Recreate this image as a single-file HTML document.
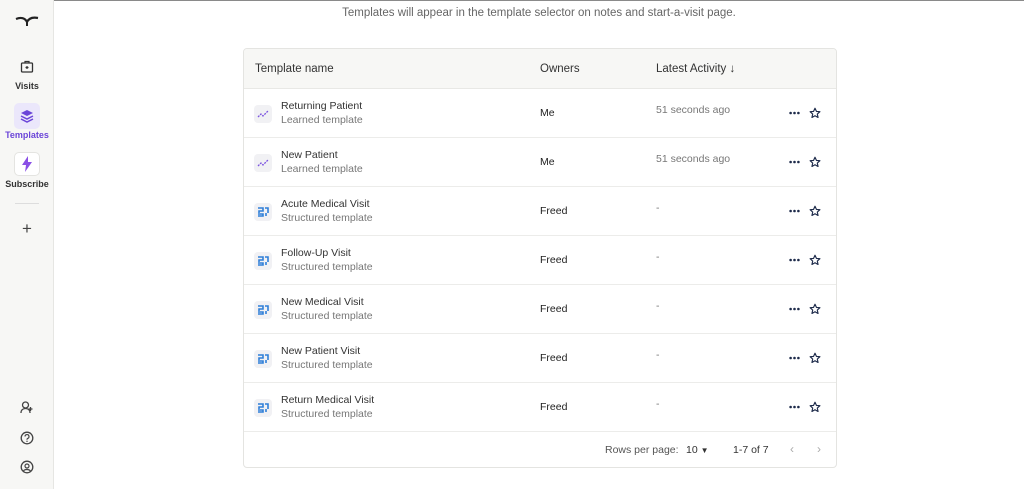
<!DOCTYPE html>
<html><head><style>
*{margin:0;padding:0;box-sizing:border-box}
body{width:1024px;height:489px;overflow:hidden;font-family:"Liberation Sans",sans-serif;background:#fff;position:relative;color:#222}
.side{position:absolute;left:0;top:0;width:54px;height:489px;background:#f7f7f5;border-right:1px solid #e6e6e3}
.topline{position:absolute;left:0;top:0;width:1024px;height:1px;background:#8a8a8a}
.nav{position:absolute;left:0;width:54px;text-align:center;font-size:9px;color:#333}
.ic{position:absolute}
.tbl{position:absolute;left:243px;top:48px;width:594px;height:420px;border:1px solid #e4e4e1;border-radius:4px;overflow:hidden}
.hd{height:40px;background:#f7f7f5;border-bottom:1px solid #e8e8e5;position:relative;font-size:11.5px;color:#333}
.row{height:49px;border-bottom:1px solid #ececea;position:relative}
.abs{position:absolute}
.nm{left:37px;top:11px;font-size:10.5px;color:#333}
.sub{left:37px;top:25px;font-size:10.5px;color:#777}
.own{left:296px;top:18px;font-size:10.5px;color:#222}
.act{left:412px;top:15px;font-size:10.5px;color:#777}
.ico{left:10px;top:16px;width:18px;height:18px;background:#f1f1f4;border-radius:4px}
</style></head><body>
<div class="topline"></div>
<div class="side">
 <svg class="ic" style="left:15px;top:14px" width="24" height="14" viewBox="0 0 24 14"><path d="M1 5 C6 3,10 4,12 8 C14 4,18 3,23 4" stroke="#222" stroke-width="2.2" fill="none"/><path d="M12 8 L12 12" stroke="#222" stroke-width="2"/></svg>
 <svg class="ic" style="left:20px;top:60px" width="14" height="13" viewBox="0 0 14 13"><rect x="1.5" y="3" width="11" height="9" rx="1" stroke="#333" fill="none" stroke-width="1.3"/><path d="M5 3V1.5h4V3M7 6v3M5.5 7.5h3" stroke="#333" stroke-width="1.2" fill="none"/></svg>
 <div class="nav" style="top:81px;font-weight:bold">Visits</div>
 <div class="ic" style="left:14px;top:103px;width:26px;height:26px;background:#ebe7fb;border-radius:5px"></div>
 <svg class="ic" style="left:20px;top:109px" width="14" height="14" viewBox="0 0 14 14"><path d="M7 1L13 4 7 7 1 4Z" fill="#6b45d8"/><path d="M1 7l6 3 6-3M1 10l6 3 6-3" stroke="#6b45d8" stroke-width="1.5" fill="none"/></svg>
 <div class="nav" style="top:130px;color:#6b45d8;font-weight:bold">Templates</div>
 <div class="ic" style="left:14px;top:152px;width:26px;height:24px;background:#fff;border:1px solid #e4e4e1;border-radius:5px"></div>
 <svg class="ic" style="left:21px;top:156px" width="12" height="16" viewBox="0 0 12 16"><path d="M7 0L1 9h4l-1 7 7-10H7z" fill="#8a4fe6"/></svg>
 <div class="nav" style="top:179px;font-weight:bold">Subscribe</div>
 <div class="ic" style="left:15px;top:203px;width:24px;height:1px;background:#ddd"></div>
 <div class="nav" style="top:219px;font-size:17px;color:#444">+</div>
 <svg class="ic" style="left:20px;top:401px" width="14" height="13" viewBox="0 0 14 13"><circle cx="5.5" cy="4" r="3" stroke="#444" fill="none" stroke-width="1.3"/><path d="M1 12c0-3 2-4.5 4.5-4.5S10 9 10 12M10.5 6v4M8.5 8h4" stroke="#444" fill="none" stroke-width="1.3"/></svg>
 <svg class="ic" style="left:20px;top:431px" width="14" height="14" viewBox="0 0 14 14"><circle cx="7" cy="7" r="5.8" stroke="#444" fill="none" stroke-width="1.3"/><path d="M5 5.5a2 2 0 1 1 2.5 2c-.5.2-.5.7-.5 1.3" stroke="#444" fill="none" stroke-width="1.2"/><circle cx="7" cy="10.3" r=".7" fill="#444"/></svg>
 <svg class="ic" style="left:20px;top:460px" width="14" height="14" viewBox="0 0 14 14"><circle cx="7" cy="7" r="5.8" stroke="#444" fill="none" stroke-width="1.3"/><circle cx="7" cy="6" r="2" stroke="#444" fill="none" stroke-width="1.2"/><path d="M3.5 11c1-2 5.5-2 7 0" stroke="#444" fill="none" stroke-width="1.2"/></svg>
</div>
<div class="abs" style="left:54px;top:7px;width:970px;text-align:center;font-size:11.5px;color:#666">Templates will appear in the template selector on notes and start-a-visit page.</div>
<div class="tbl">
 <div class="hd"><span class="abs" style="left:11px;top:14px">Template name</span><span class="abs" style="left:296px;top:14px">Owners</span><span class="abs" style="left:412px;top:14px">Latest Activity ↓</span></div>
 ROWS
</div>
<script>
const rows=[["Returning Patient","Learned template","Me","51 seconds ago",1],["New Patient","Learned template","Me","51 seconds ago",1],["Acute Medical Visit","Structured template","Freed","-",0],["Follow-Up Visit","Structured template","Freed","-",0],["New Medical Visit","Structured template","Freed","-",0],["New Patient Visit","Structured template","Freed","-",0],["Return Medical Visit","Structured template","Freed","-",0]];
let h="";
for(const r of rows){
 const icon=r[4]?'<svg class="abs" style="left:13px;top:20px" width="12" height="9" viewBox="0 0 12 9"><path d="M1 8l3-3 2 2 5-5" stroke="#7c55e0" stroke-width="1.3" fill="none" stroke-dasharray="2 1"/></svg>':'<svg class="abs" style="left:14px;top:20px" width="11" height="10" viewBox="0 0 11 10"><path d="M0 1h5v3H1v2M0 7h5v2H0M7 1h3v5M8 6v3" stroke="#2f7fd8" stroke-width="1.6" fill="none"/></svg>';
 h+=`<div class="row"><div class="abs ico"></div>${icon}<span class="abs nm">${r[0]}</span><span class="abs sub">${r[1]}</span><span class="abs own">${r[2]}</span><span class="abs act">${r[3]}</span><svg class="abs" style="left:545px;top:22px" width="11" height="4" viewBox="0 0 11 4"><circle cx="1.6" cy="2" r="1.3" fill="#1d2a4a"/><circle cx="5.5" cy="2" r="1.3" fill="#1d2a4a"/><circle cx="9.4" cy="2" r="1.3" fill="#1d2a4a"/></svg><svg class="abs" style="left:565px;top:18px" width="12" height="12" viewBox="0 0 24 24"><path d="M12 2.5l2.9 6.3 6.9.7-5.2 4.6 1.5 6.8L12 17.4 5.9 20.9l1.5-6.8L2.2 9.5l6.9-.7z" stroke="#1d2a4a" stroke-width="2.3" fill="none" stroke-linejoin="round"/></svg></div>`;
}
h+='<div class="abs" style="left:361px;top:395px;font-size:10.5px;color:#555">Rows per page:</div><div class="abs" style="left:442px;top:395px;font-size:10.5px;color:#333">10 <span style="font-size:8px">▼</span></div><div class="abs" style="left:489px;top:395px;font-size:10.5px;color:#333">1-7 of 7</div><div class="abs" style="left:546px;top:393px;font-size:12px;color:#aaa">‹</div><div class="abs" style="left:573px;top:393px;font-size:12px;color:#aaa">›</div>';
document.querySelector('.tbl').innerHTML=document.querySelector('.tbl').innerHTML.replace('ROWS',h);
</script>
</body></html>
